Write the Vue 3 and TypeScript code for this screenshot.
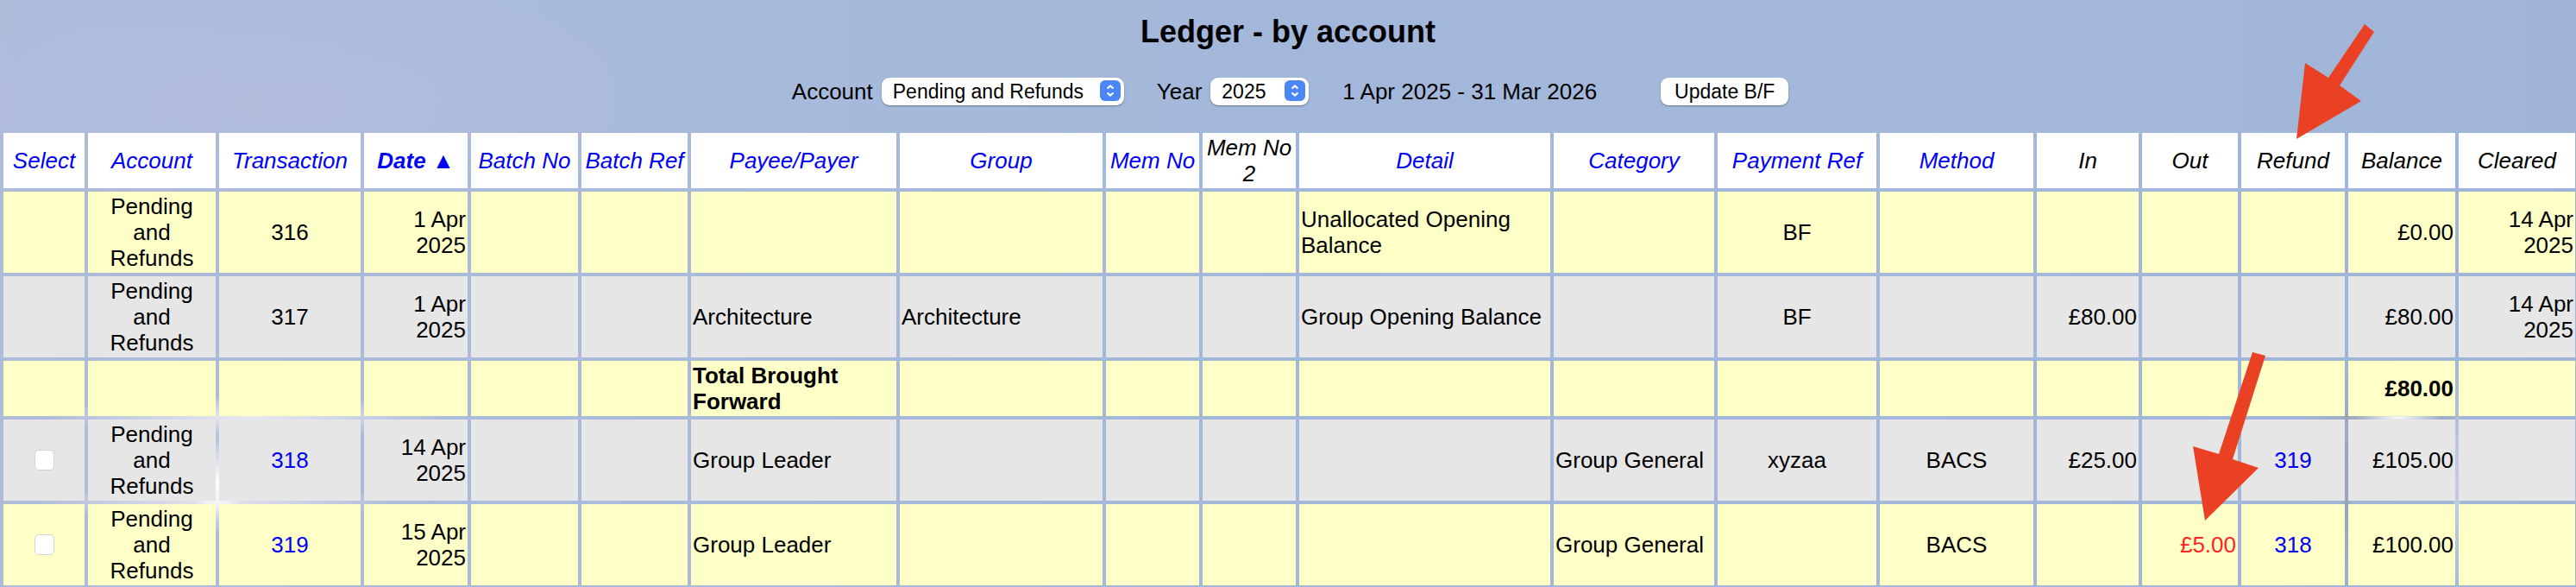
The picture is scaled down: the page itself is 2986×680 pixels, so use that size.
<template>
  <div class="page">
    <h1 class="title">Ledger - by account</h1>
    <div class="toolbar">
      <label class="lbl">Account</label>
      <span class="select-wrap account-sel">
        <select><option>Pending and Refunds</option></select>
        <svg class="stepper" viewBox="0 0 24 24">
          <rect width="24" height="24" rx="6" fill="#4a86f5" />
          <path d="M8.5 9.5 12 6.5l3.5 3M8.5 14.5l3.5 3 3.5-3" fill="none" stroke="#fff" stroke-width="2.2" />
        </svg>
      </span>
      <label class="lbl year-lbl">Year</label>
      <span class="select-wrap year-sel">
        <select><option>2025</option></select>
        <svg class="stepper" viewBox="0 0 24 24">
          <rect width="24" height="24" rx="6" fill="#4a86f5" />
          <path d="M8.5 9.5 12 6.5l3.5 3M8.5 14.5l3.5 3 3.5-3" fill="none" stroke="#fff" stroke-width="2.2" />
        </svg>
      </span>
      <span class="range">1 Apr 2025 - 31 Mar 2026</span>
      <button class="update">Update B/F</button>
    </div>

    <table class="ledger">
      <colgroup>
        <col v-for="c in columns" :key="c.label" :style="{ width: c.width + 'px' }" />
      </colgroup>
      <thead>
        <tr>
          <th v-for="c in columns" :key="c.label" :class="{ sortable: c.sortable, sorted: c.label === 'Date' }">
            {{ c.label }}<template v-if="c.label === 'Date'"> ▲</template>
          </th>
        </tr>
      </thead>
      <tbody>
        <tr v-for="(row, i) in rows" :key="i" :class="i % 2 === 0 ? 'yellow' : 'grey'">
          <td v-for="(c, j) in columns" :key="c.label" :class="[c.align, { bold: row.bold }]">
            <input v-if="j === 0 && row.check" type="checkbox" class="check" />
            <a v-else-if="isLink(c.label, row)" class="link">{{ row.cells[j] }}</a>
            <span v-else-if="row.cells[j].startsWith('-')" class="neg">{{ row.cells[j].slice(1) }}</span>
            <template v-else>{{ row.cells[j] }}</template>
          </td>
        </tr>
      </tbody>
    </table>

    <svg class="arrows" viewBox="0 0 2986 680">
      <polygon points="2741,28 2752,37 2712,99 2737,117 2662,161 2672,73 2699,90" />
      <polygon points="2611,408 2626,412 2588,532 2618,542 2556,603 2542,517 2572,526" />
    </svg>
  </div>
</template>

<script setup lang="ts">
interface Column { label: string; width: number; align: string; sortable: boolean }
interface Row { cells: string[]; check?: boolean; bold?: boolean; links?: boolean }

const col = (label: string, width: number, align: string, sortable = true): Column => ({ label, width, align, sortable })

const columns: Column[] = [
  col('Select', 94, 'c'),
  col('Account', 148, 'c'),
  col('Transaction', 164, 'c'),
  col('Date', 120, 'r'),
  col('Batch No', 124, 'c'),
  col('Batch Ref', 123, 'c'),
  col('Payee/Payer', 238, 'l'),
  col('Group', 235, 'l'),
  col('Mem No', 108, 'c'),
  col('Mem No 2', 108, 'c', false),
  col('Detail', 291, 'l'),
  col('Category', 186, 'l'),
  col('Payment Ref', 184, 'c'),
  col('Method', 178, 'c'),
  col('In', 118, 'r', false),
  col('Out', 111, 'r', false),
  col('Refund', 120, 'c', false),
  col('Balance', 124, 'r', false),
  col('Cleared', 135, 'r', false),
]

const acc = 'Pending and Refunds'
const rows: Row[] = [
  { cells: ['', acc, '316', '1 Apr 2025', '', '', '', '', '', '', 'Unallocated Opening Balance', '', 'BF', '', '', '', '', '£0.00', '14 Apr 2025'] },
  { cells: ['', acc, '317', '1 Apr 2025', '', '', 'Architecture', 'Architecture', '', '', 'Group Opening Balance', '', 'BF', '', '£80.00', '', '', '£80.00', '14 Apr 2025'] },
  { bold: true, cells: ['', '', '', '', '', '', 'Total Brought Forward', '', '', '', '', '', '', '', '', '', '', '£80.00', ''] },
  { check: true, links: true, cells: ['', acc, '318', '14 Apr 2025', '', '', 'Group Leader', '', '', '', '', 'Group General', 'xyzaa', 'BACS', '£25.00', '', '319', '£105.00', ''] },
  { check: true, links: true, cells: ['', acc, '319', '15 Apr 2025', '', '', 'Group Leader', '', '', '', '', 'Group General', '', 'BACS', '', '-£5.00', '318', '£100.00', ''] },
]

const isLink = (label: string, row: Row) => !!row.links && (label === 'Transaction' || label === 'Refund')
</script>

<style scoped>
.page {
  position: relative;
  width: 2986px;
  height: 680px;
  overflow: hidden;
  font-family: "Liberation Sans", Arial, sans-serif;
  font-size: 26px;
  color: #000;
  background:
    radial-gradient(ellipse 30px 60px at 252px 560px, #fff, rgba(255,255,255,0) 100%),
    radial-gradient(ellipse 240px 24px at 290px 483px, rgba(255,250,245,.75), rgba(255,255,255,0) 100%),
    radial-gradient(ellipse 220px 20px at 250px 582px, rgba(255,245,245,.7), rgba(255,255,255,0) 100%),
    radial-gradient(ellipse 50px 6px at 2780px 484px, #fff, rgba(255,255,255,0) 100%),
    radial-gradient(ellipse 100px 10px at 2770px 483px, rgba(150,145,125,.45), rgba(150,145,125,0) 100%),
    radial-gradient(ellipse 6px 150px at 2720px 560px, rgba(130,130,130,.4), rgba(130,130,130,0) 100%),
    radial-gradient(ellipse 6px 150px at 2848px 560px, rgba(235,235,235,.5), rgba(235,235,235,0) 100%),
    radial-gradient(ellipse 420px 150px at 340px 120px, rgba(190,190,222,.3), rgba(190,190,222,0) 100%),
    linear-gradient(90deg, #aebbd9 0%, #a8badb 30%, #a3b7da 50%, #a3b8da 75%, #a0b4d8 100%);
}
.title {
  margin: 0;
  padding-top: 16px;
  font-size: 36px;
  line-height: 41px;
  font-weight: bold;
  text-align: center;
}
.toolbar {
  display: flex;
  justify-content: center;
  align-items: center;
  height: 32px;
  margin-top: 33px;
  padding-left: 5px;
}
.lbl { margin-right: 10px; }
.year-lbl { margin-left: 38px; }
.select-wrap { position: relative; display: block; height: 32px; }
.account-sel { width: 281px; }
.year-sel { width: 114px; }
.select-wrap select {
  appearance: none;
  width: 100%;
  height: 100%;
  border: none;
  border-radius: 9px;
  background: #fff;
  box-shadow: 0 1px 2px rgba(0,0,0,.35);
  padding: 0 0 0 13px;
  font-family: "Liberation Sans", Arial, sans-serif;
  font-size: 23px;
  color: #000;
}
.stepper { position: absolute; right: 4px; top: 3px; width: 24px; height: 24px; }
.range { margin-left: 39px; }
.update {
  width: 148px;
  height: 32px;
  margin-left: 74px;
  border: none;
  border-radius: 9px;
  background: #fff;
  box-shadow: 0 1px 2px rgba(0,0,0,.35);
  font-family: "Liberation Sans", Arial, sans-serif;
  font-size: 23px;
  color: #000;
  padding: 0;
}
.ledger {
  table-layout: fixed;
  width: 2989px;
  margin-top: 28px;
  border-collapse: separate;
  border-spacing: 4px;
}
.ledger th, .ledger td {
  padding: 2px;
  vertical-align: middle;
  line-height: 30px;
  overflow: hidden;
}
.ledger th {
  height: 60px;
  background: #fff;
  font-weight: normal;
  font-style: italic;
  text-align: center;
}
.sortable { color: #0000f5; }
.ledger th.sorted { font-weight: bold; }
.yellow td { background: #ffffc8; height: 60px; }
.grey td { background: #e6e6e6; height: 60px; }
.ledger td.l { text-align: left; }
.ledger td.c { text-align: center; }
.ledger td.r { text-align: right; }
.ledger td.bold { font-weight: bold; }
.link { color: #0000f5; }
.neg { color: #f22; }
.check {
  appearance: none;
  display: block;
  width: 23px;
  height: 24px;
  margin: 0 auto;
  background: #fff;
  border: 1px solid #d4d4d4;
  border-radius: 5px;
}
.arrows { position: absolute; left: 0; top: 0; width: 2986px; height: 680px; pointer-events: none; }
.arrows polygon { fill: #ea4125; }
</style>
